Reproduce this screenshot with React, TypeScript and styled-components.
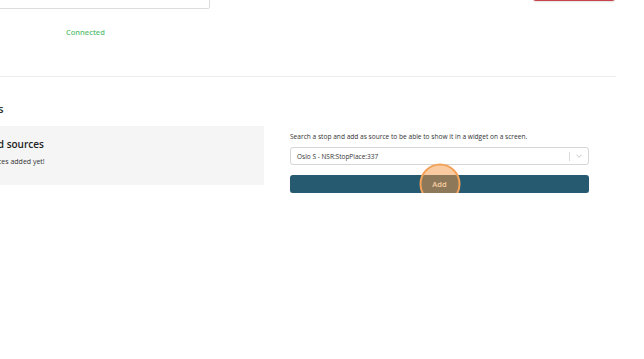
import { createGlobalStyle, styled } from 'styled-components';

const GlobalStyle = createGlobalStyle`
  html, body {
    margin: 0;
    padding: 0;
    background: #fff;
    overflow: hidden;
  }
  body {
    font-family: "Open Sans", "Liberation Sans", sans-serif;
    color: #222;
  }
`;

export default function App() {
  return (
    <>
      <GlobalStyle />
      <S.Page>
        <S.TopRow>
          <S.Field>
            <S.Input />
            <S.Status>Connected</S.Status>
          </S.Field>
          <S.DangerButton />
        </S.TopRow>

        <S.Divider />

        <S.SectionTitle>Sources</S.SectionTitle>

        <S.Columns>
          <S.AddedBox>
            <S.AddedTitle>Added sources</S.AddedTitle>
            <S.AddedEmpty>No sources added yet!</S.AddedEmpty>
          </S.AddedBox>

          <S.SearchCol>
            <S.Hint>Search a stop and add as source to be able to show it in a widget on a screen.</S.Hint>
            <S.Select>
              <S.SelectValue>Oslo S - NSR:StopPlace:337</S.SelectValue>
              <S.SelectSep />
              <S.Chevron viewBox="0 0 10 10">
                <path d="M2.5 3.8 L5 6.2 L7.5 3.8" fill="none" stroke="#c4c4c4" strokeWidth="0.9" />
              </S.Chevron>
            </S.Select>
            <S.AddButton>
              Add
              <S.Highlight />
            </S.AddButton>
          </S.SearchCol>
        </S.Columns>
      </S.Page>
    </>
  );
}

const S = {
  Page: styled.div`
    width: 655px;
    margin: -18px 0 0 -39px;
  `,
  TopRow: styled.div`
    display: flex;
    justify-content: space-between;
    align-items: flex-start;
  `,
  Field: styled.div`
    display: flex;
    flex-direction: column;
  `,
  Input: styled.div`
    box-sizing: border-box;
    width: 249px;
    height: 27px;
    border: 1px solid #dcdcdc;
    border-radius: 2px;
    background: #fff;
  `,
  Status: styled.span`
    margin: 18px 0 0 105px;
    font-size: 7.5px;
    font-weight: 600;
    line-height: 10px;
    color: #5cbf74;
  `,
  DangerButton: styled.div`
    width: 82px;
    height: 19px;
    margin-right: 1px;
    border-radius: 3px;
    background: #c8434b;
    box-shadow: 0 1px 2px rgba(0, 0, 0, 0.12);
  `,
  Divider: styled.hr`
    margin: 39px 0 0;
    border: none;
    border-top: 1px solid #ededed;
  `,
  SectionTitle: styled.h2`
    margin: 24px 0 0 -1px;
    font-size: 11.5px;
    font-weight: 600;
    line-height: 16px;
    color: #333;
  `,
  Columns: styled.div`
    display: grid;
    grid-template-columns: 303px 299px;
    column-gap: 26px;
    margin-top: 9px;
  `,
  AddedBox: styled.div`
    box-sizing: border-box;
    height: 59px;
    padding: 11px 12px;
    background: #f5f5f5;
  `,
  AddedTitle: styled.h3`
    margin: 0;
    font-size: 10px;
    font-weight: 600;
    line-height: 14px;
    color: #222;
  `,
  AddedEmpty: styled.p`
    margin: 6px 0 0 -1px;
    font-size: 7px;
    line-height: 10px;
    color: #333;
  `,
  SearchCol: styled.div`
    display: flex;
    flex-direction: column;
    padding-top: 6px;
  `,
  Hint: styled.p`
    margin: 0;
    font-size: 6.6px;
    line-height: 10px;
    color: #333;
  `,
  Select: styled.div`
    box-sizing: border-box;
    display: flex;
    align-items: center;
    height: 18px;
    margin-top: 5px;
    padding: 0 4px 0 6px;
    border: 1px solid #d6d6d6;
    border-radius: 3px;
    background: #fff;
  `,
  SelectValue: styled.span`
    flex: 1;
    font-size: 6.5px;
    color: #333;
  `,
  SelectSep: styled.span`
    width: 1px;
    height: 9px;
    background: #d9d9d9;
  `,
  Chevron: styled.svg`
    width: 10px;
    height: 10px;
    margin-left: 4px;
  `,
  AddButton: styled.div`
    position: relative;
    box-sizing: border-box;
    display: flex;
    align-items: center;
    justify-content: center;
    height: 18px;
    margin-top: 10px;
    border-radius: 3px;
    background: #255a70;
    font-size: 7.5px;
    font-weight: 600;
    color: #fff;
    box-shadow: 0 1px 1px rgba(0, 0, 0, 0.15);
  `,
  Highlight: styled.span`
    position: absolute;
    left: 50%;
    top: 50%;
    box-sizing: border-box;
    width: 41px;
    height: 41px;
    margin-top: -0.5px;
    transform: translate(-50%, -50%);
    border: 2px solid #f3a25a;
    border-radius: 50%;
    background: rgba(245, 152, 66, 0.5);
  `,
};
